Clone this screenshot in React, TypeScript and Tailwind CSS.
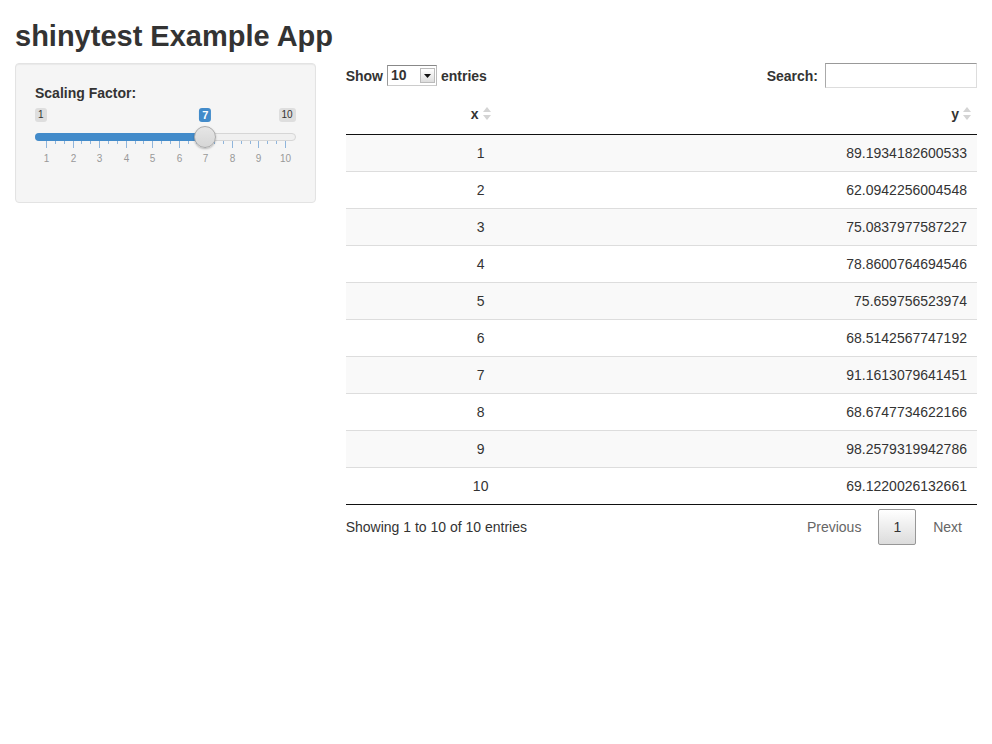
const ROWS: [number, string][] = [
  [1, '89.1934182600533'],
  [2, '62.0942256004548'],
  [3, '75.0837977587227'],
  [4, '78.8600764694546'],
  [5, '75.659756523974'],
  [6, '68.5142567747192'],
  [7, '91.1613079641451'],
  [8, '68.6747734622166'],
  [9, '98.2579319942786'],
  [10, '69.1220026132661'],
]

const MIN = 1
const MAX = 10
const VALUE = 7

// handle centres run from 11px to (width - 11px) of the slider
function pos(v: number) {
  return 11 + ((v - MIN) * 239) / (MAX - MIN)
}

function SortIcon() {
  return (
    <svg width="8" height="13" viewBox="0 0 8 13" className="inline-block ml-[4px] align-[-1px]">
      <path d="M4 0 L8 5 L0 5 Z" fill="#d4d4d4" />
      <path d="M4 13 L8 8 L0 8 Z" fill="#d4d4d4" />
    </svg>
  )
}

function Slider() {
  const ticks: { x: number; major: boolean }[] = []
  for (let v = MIN; v <= MAX; v++) {
    ticks.push({ x: pos(v), major: true })
    if (v < MAX) {
      ticks.push({ x: pos(v + 1 / 3), major: false })
      ticks.push({ x: pos(v + 2 / 3), major: false })
    }
  }
  const handle = pos(VALUE)

  return (
    <div className="relative h-[60px] w-full">
      {/* grid */}
      {ticks.map((t, i) => (
        <div
          key={i}
          className={`absolute top-[33px] w-px bg-[#8fb5dc] ${t.major ? 'h-[7px]' : 'h-[3px]'}`}
          style={{ left: Math.round(t.x) }}
        />
      ))}
      {Array.from({ length: MAX - MIN + 1 }, (_, i) => MIN + i).map((v) => (
        <span
          key={v}
          className="absolute top-[44px] -translate-x-1/2 text-[10px] leading-[13px] text-[#999]"
          style={{ left: Math.round(pos(v)) + 0.5 }}
        >
          {v}
        </span>
      ))}

      {/* min / max / value labels */}
      <span className="absolute left-0 top-0 rounded-[3px] bg-[#dedede] px-[3px] text-[10px] leading-[14px] text-[#333]">
        {MIN}
      </span>
      <span className="absolute right-0 top-0 rounded-[3px] bg-[#dedede] px-[3px] text-[10px] leading-[14px] text-[#333]">
        {MAX}
      </span>
      <span
        className="absolute top-0 -translate-x-1/2 rounded-[3px] bg-[#428bca] px-[3px] text-[11px] font-bold leading-[14px] text-white"
        style={{ left: handle }}
      >
        {VALUE}
      </span>

      {/* track */}
      <div className="absolute left-0 right-0 top-[25px] h-[8px] rounded-full border border-[#d6d6d6] bg-[#f0f0f0]" />
      <div
        className="absolute left-0 top-[25px] h-[8px] rounded-l-full bg-[#428bca]"
        style={{ width: handle }}
      />
      <div
        className="absolute top-[18px] h-[22px] w-[22px] -translate-x-1/2 rounded-full border border-[#ababab] bg-gradient-to-b from-[#e6e6e6] to-[#d6d6d6] shadow-[0_1px_2px_rgba(0,0,0,0.25)]"
        style={{ left: handle }}
      />
    </div>
  )
}

export default function App() {
  return (
    <div className="min-h-screen bg-white px-[15px] font-['Liberation_Sans',Arial,sans-serif] text-[14px] leading-[20px] text-[#333]">
      <h2 className="mt-[20px] mb-[10px] text-[29px] font-bold leading-[33px] text-[#333]">
        shinytest Example App
      </h2>

      <div className="-mx-[15px] flex">
        {/* Sidebar */}
        <div className="w-1/3 px-[15px]">
          <div className="rounded-[4px] border border-[#e3e3e3] bg-[#f5f5f5] p-[19px] shadow-[inset_0_1px_1px_rgba(0,0,0,0.05)]">
            <div className="mb-[15px]">
              <label className="mb-[5px] block font-bold">Scaling Factor:</label>
              <Slider />
            </div>
          </div>
        </div>

        {/* Main */}
        <div className="w-2/3 px-[15px]">
          <div className="flex h-[25px] items-center justify-between">
            <div className="flex items-center font-bold">
              Show
              <div className="mx-[4px] flex h-[21px] w-[50px] items-center border border-t-[#888] border-l-[#999] border-r-[#bbb] border-b-[#ccc] bg-white pl-[3px]">
                <span className="flex-1 text-[14px] font-bold leading-[19px]">10</span>
                <span className="mr-[1px] flex h-[15px] w-[15px] items-center justify-center border border-[#bbb] bg-gradient-to-b from-white to-[#ddd]">
                  <svg width="7" height="4" viewBox="0 0 7 4">
                    <path d="M0 0 L7 0 L3.5 4 Z" fill="#111" />
                  </svg>
                </span>
              </div>
              entries
            </div>
            <div className="flex items-center font-bold">
              Search:
              <div className="ml-[7px] h-[25px] w-[152px] border border-t-[#999] border-l-[#aaa] border-r-[#ddd] border-b-[#ddd] bg-white" />
            </div>
          </div>

          <table className="mt-[6px] w-full border-collapse">
            <thead>
              <tr className="border-b border-[#111]">
                <th className="w-[270px] px-[10px] py-[10px] text-center font-bold">
                  x
                  <SortIcon />
                </th>
                <th className="py-[10px] pr-[6px] pl-[10px] text-right font-bold">
                  y
                  <SortIcon />
                </th>
              </tr>
            </thead>
            <tbody>
              {ROWS.map(([x, y], i) => (
                <tr
                  key={x}
                  className={`${i > 0 ? 'border-t border-[#ddd]' : ''} ${i % 2 === 0 ? 'bg-[#f9f9f9]' : 'bg-white'}`}
                >
                  <td className="px-[10px] py-[8px] text-center">{x}</td>
                  <td className="px-[10px] py-[8px] text-right">{y}</td>
                </tr>
              ))}
            </tbody>
            <tfoot>
              <tr className="border-t border-[#111]">
                <td colSpan={2} className="h-0 p-0" />
              </tr>
            </tfoot>
          </table>

          <div className="mt-[4px] flex items-center justify-between">
            <span>Showing 1 to 10 of 10 entries</span>
            <div className="flex items-center">
              <span className="ml-[2px] border border-transparent px-[14px] py-[7px] text-[#666]">Previous</span>
              <span className="ml-[2px] rounded-[2px] border border-[#979797] bg-gradient-to-b from-white to-[#dcdcdc] px-[14px] py-[7px] text-[#333]">
                1
              </span>
              <span className="ml-[2px] border border-transparent px-[14px] py-[7px] text-[#666]">Next</span>
            </div>
          </div>
        </div>
      </div>
    </div>
  )
}
